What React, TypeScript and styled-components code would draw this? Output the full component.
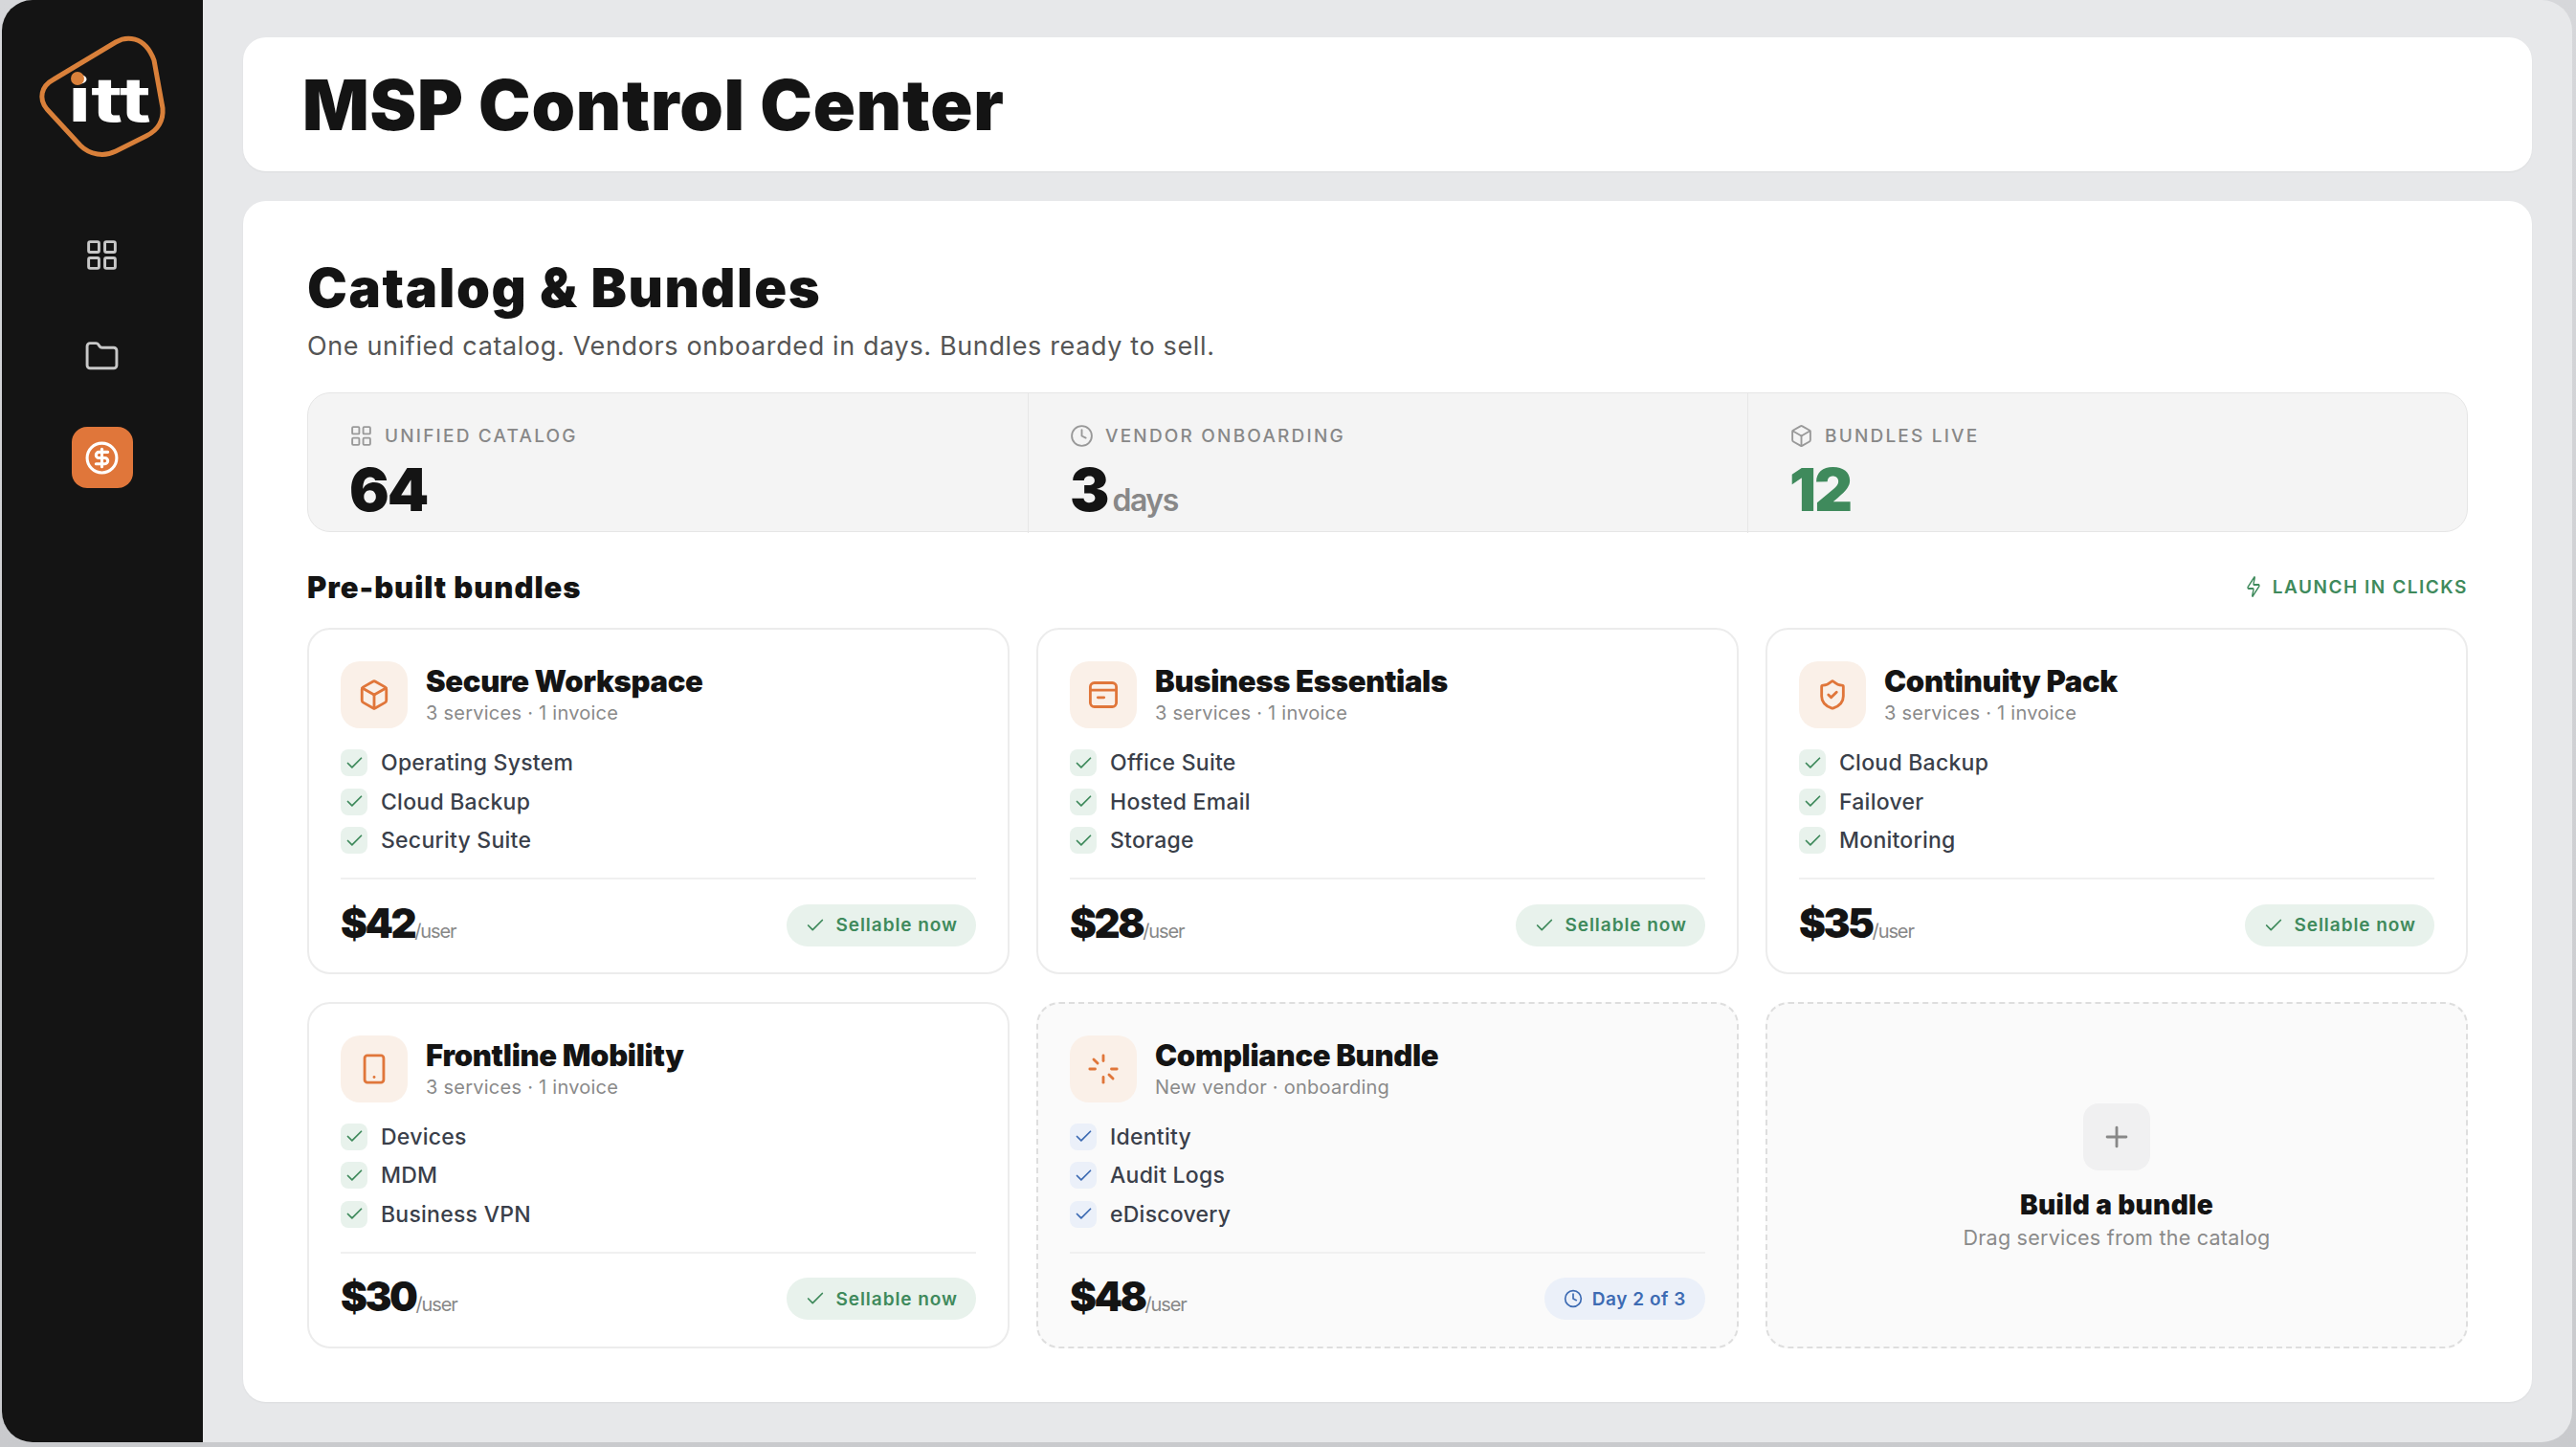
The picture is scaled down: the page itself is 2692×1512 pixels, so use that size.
import React from "react";
import styled, { createGlobalStyle } from "styled-components";
import { LayoutGrid, Folder, CircleDollarSign, Clock, Box, ShieldCheck, Smartphone, Check, Zap, Plus } from "lucide-react";

const Global = createGlobalStyle`
  html, body { margin: 0; padding: 0; width: 2692px; height: 1512px; overflow: hidden; background: #c9cacd; }
  * { box-sizing: border-box; }
  body { font-family: Inter, "Liberation Sans", sans-serif; color: #141414; }
`;

const Frame = styled.div`
  width: 2692px; height: 1512px; padding: 0 4px 5px 2px; background: linear-gradient(#d6d7da, #c9cacd);
`;
const Win = styled.div`
  height: 100%; display: flex; border-radius: 32px; overflow: hidden; background: #e7e8ea;
`;
const Side = styled.aside`
  width: 210px; flex: none; background: #141414; display: flex; flex-direction: column; align-items: center; padding: 234px 1px 0 0; position: relative; gap: 42px;
`;
const LogoSvg = styled.svg`
  position: absolute; left: 35px; top: 34px;
`;
const NavBtn = styled.div<{ $active?: boolean }>`
  width: 64px; height: 64px; border-radius: 16px; display: flex; align-items: center; justify-content: center;
  background: ${p => (p.$active ? "#e0763a" : "transparent")};
  color: ${p => (p.$active ? "#fff" : "#c8c8c8")};
`;
const Main = styled.main`
  flex: 1; min-width: 0; padding: 39px 42px 42px 42px; display: flex; flex-direction: column; gap: 31px;
`;
const Header = styled.header`
  height: 140px; flex: none; background: #fff; border-radius: 24px; display: flex; align-items: center; padding-left: 62px; box-shadow: 0 1px 2px rgba(0,0,0,.05);
`;
const Title = styled.h1`
  margin: 0; font-size: 73px; font-weight: 900; letter-spacing: 0.8px; line-height: 1;
`;
const Content = styled.section`
  flex: 1; background: #fff; border-radius: 24px; padding: 59px 67px 0; display: flex; flex-direction: column; box-shadow: 0 1px 2px rgba(0,0,0,.05);
`;
const H2 = styled.h2`
  margin: 0; font-size: 56px; font-weight: 900; line-height: 64px; letter-spacing: 1.6px;
`;
const Sub = styled.p`
  margin: 11px 0 0; font-size: 27px; line-height: 36px; font-weight: 400; color: #555; letter-spacing: 0.63px;
`;
const Stats = styled.div`
  margin-top: 30px; height: 146px; flex: none; display: grid; grid-template-columns: 752px 752px 1fr; background: #f4f4f4; border: 1.5px solid #e6e6e6; border-radius: 24px;
`;
const Stat = styled.div`
  padding: 32px 0 0 43px; & + & { border-left: 1.5px solid #e6e6e6; }
`;
const StatLabel = styled.div`
  display: flex; align-items: center; gap: 12px; font-size: 19px; line-height: 24px; font-weight: 500; letter-spacing: 2.2px; color: #888; text-transform: uppercase;
`;
const StatValue = styled.div<{ $green?: boolean }>`
  margin-top: 10px; font-size: 62px; line-height: 68px; font-weight: 900; letter-spacing: -2px; color: ${p => (p.$green ? "#3f8a5c" : "#141414")};
  small { font-size: 32px; font-weight: 600; color: #888; margin-left: 5px; letter-spacing: -1.5px; }
`;
const SectionRow = styled.div`
  margin-top: 33px; height: 48px; flex: none; display: flex; align-items: center; justify-content: space-between;
`;
const H3 = styled.h3`
  margin: 0; font-size: 31px; font-weight: 900; letter-spacing: 0.95px;
`;
const Launch = styled.div`
  display: flex; align-items: center; gap: 12px; font-size: 19px; font-weight: 600; letter-spacing: 1.55px; color: #3f8a5c; text-transform: uppercase;
`;
const Grid = styled.div`
  margin-top: 19px; display: grid; grid-template-columns: repeat(3, 734px); grid-auto-rows: 362px; column-gap: 28px; row-gap: 28.5px;
`;
const Card = styled.article<{ $dashed?: boolean }>`
  border-radius: 24px; padding: 33px 33px 0 33px; display: flex; flex-direction: column;
  background: ${p => (p.$dashed ? "#fafafa" : "#fff")};
  border: 2px ${p => (p.$dashed ? "dashed #dedede" : "solid #ececec")};
`;
const CardHead = styled.div`
  display: flex; gap: 19px; height: 70px;
`;
const IconTile = styled.div`
  width: 70px; height: 70px; flex: none; border-radius: 20px; background: #faf0e8; color: #e0763a; display: flex; align-items: center; justify-content: center;
`;
const CardTitle = styled.div`
  font-size: 31px; line-height: 38px; font-weight: 900; letter-spacing: -0.3px; margin-top: 2px;
`;
const CardSub = styled.div`
  font-size: 20px; line-height: 26px; color: #8a8a8a; letter-spacing: 0.25px; margin-top: 1px;
`;
const List = styled.ul`
  list-style: none; margin: 22px 0 0; padding: 0; display: flex; flex-direction: column; gap: 12.5px;
`;
const Item = styled.li`
  display: flex; align-items: center; gap: 14px; height: 28px; font-size: 23px; font-weight: 500; color: #3a3f4a; letter-spacing: 0.25px;
`;
const CheckBox = styled.span<{ $blue?: boolean }>`
  width: 28px; height: 28px; border-radius: 8px; display: flex; align-items: center; justify-content: center;
  background: ${p => (p.$blue ? "#ebf0f9" : "#e8f2ec")}; color: ${p => (p.$blue ? "#3d6bb3" : "#3f8a5c")};
`;
const Foot = styled.div`
  margin-top: 25px; border-top: 2px solid #f0f0f0; padding-top: 25px; display: flex; align-items: center; justify-content: space-between; height: 72px;
`;
const Price = styled.div`
  margin-top: 4px; font-size: 42px; line-height: 44px; font-weight: 900; letter-spacing: -2.5px;
  small { font-size: 20px; font-weight: 400; color: #888; letter-spacing: -1.1px; margin-left: 0; }
`;
const Pill = styled.div<{ $blue?: boolean }>`
  height: 44px; padding: 0 ${p => (p.$blue ? "20px" : "19px")}; border-radius: 22px; display: flex; align-items: center; gap: 10px; font-size: 19px; font-weight: 600;
  letter-spacing: ${p => (p.$blue ? "0.55px" : "0.95px")};
  background: ${p => (p.$blue ? "#ebf0f9" : "#e8f2ec")}; color: ${p => (p.$blue ? "#3d6bb3" : "#3f8a5c")};
`;
const BuildCard = styled(Card)`
  align-items: center; padding: 104px 33px 0;
`;
const PlusTile = styled.div`
  width: 70px; height: 70px; border-radius: 16px; background: #f0f0f1; color: #888; display: flex; align-items: center; justify-content: center;
`;
const BuildTitle = styled.div`
  margin-top: 18px; font-size: 28px; line-height: 36px; font-weight: 900; letter-spacing: 0.35px;
`;
const BuildSub = styled.div`
  margin-top: 1px; font-size: 21.5px; line-height: 30px; color: #8a8a8a; letter-spacing: 0.25px;
`;

const Logo = () => (
  <LogoSvg width="142" height="140" viewBox="36 34 142 140">
    <path
      d="M55 83 L120 44 C130 38 150 36 160 63 L169 113 C170 127 164 136 152 142 L120 158 C108 164 93 162 83 152 L48 114 C39 103 42 90 55 83 Z"
      fill="none" stroke="#d9803a" strokeWidth="5" strokeLinejoin="round"
    />
    <text x="70" y="127" fontFamily="Inter, sans-serif" fontWeight="700" fontSize="64" fill="#fff" textLength="87" lengthAdjust="spacingAndGlyphs">itt</text>
    <circle cx="80" cy="82" r="7" fill="#d9803a" />
  </LogoSvg>
);

const Card2 = () => (
  <svg width="34" height="34" viewBox="0 0 24 24" fill="none" stroke="currentColor" strokeWidth="2" strokeLinecap="round" strokeLinejoin="round">
    <rect x="2.4" y="3.2" width="19.2" height="17.6" rx="3" />
    <path d="M2.4 8.5h19.2" />
    <path d="M8 14h4.5" />
  </svg>
);
const Spinner = () => (
  <svg width="34" height="34" viewBox="0 0 24 24" fill="none" stroke="currentColor" strokeWidth="2" strokeLinecap="round">
    <path d="M12 2v4" /><path d="M12 18v4" /><path d="M2 12h4" /><path d="M18 12h4" />
    <path d="m4.9 4.9 2.9 2.9" /><path d="m16.2 16.2 2.9 2.9" />
  </svg>
);

type B = { icon: React.ReactNode; title: string; sub: string; items: string[]; price: string; blue?: boolean };
const bundles: B[] = [
  { icon: <Box size={34} strokeWidth={2} />, title: "Secure Workspace", sub: "3 services · 1 invoice", items: ["Operating System", "Cloud Backup", "Security Suite"], price: "$42" },
  { icon: <Card2 />, title: "Business Essentials", sub: "3 services · 1 invoice", items: ["Office Suite", "Hosted Email", "Storage"], price: "$28" },
  { icon: <ShieldCheck size={34} strokeWidth={2} />, title: "Continuity Pack", sub: "3 services · 1 invoice", items: ["Cloud Backup", "Failover", "Monitoring"], price: "$35" },
  { icon: <Smartphone size={34} strokeWidth={2} />, title: "Frontline Mobility", sub: "3 services · 1 invoice", items: ["Devices", "MDM", "Business VPN"], price: "$30" },
  { icon: <Spinner />, title: "Compliance Bundle", sub: "New vendor · onboarding", items: ["Identity", "Audit Logs", "eDiscovery"], price: "$48", blue: true },
];

export default function App() {
  return (
    <Frame>
      <Global />
      <Win>
        <Side>
          <Logo />
          <NavBtn><LayoutGrid size={37} strokeWidth={1.9} /></NavBtn>
          <NavBtn><Folder size={37} strokeWidth={1.9} /></NavBtn>
          <NavBtn $active><CircleDollarSign size={37} strokeWidth={2} /></NavBtn>
        </Side>
        <Main>
          <Header><Title>MSP Control Center</Title></Header>
          <Content>
            <H2>Catalog &amp; Bundles</H2>
            <Sub>One unified catalog. Vendors onboarded in days. Bundles ready to sell.</Sub>
            <Stats>
              <Stat>
                <StatLabel><LayoutGrid size={25} strokeWidth={1.8} color="#999" />Unified catalog</StatLabel>
                <StatValue>64</StatValue>
              </Stat>
              <Stat>
                <StatLabel><Clock size={25} strokeWidth={1.8} color="#999" />Vendor onboarding</StatLabel>
                <StatValue>3<small>days</small></StatValue>
              </Stat>
              <Stat>
                <StatLabel><Box size={25} strokeWidth={1.8} color="#999" />Bundles live</StatLabel>
                <StatValue $green>12</StatValue>
              </Stat>
            </Stats>
            <SectionRow>
              <H3>Pre-built bundles</H3>
              <Launch><Zap width={16} height={24} preserveAspectRatio="none" strokeWidth={2} />Launch in clicks</Launch>
            </SectionRow>
            <Grid>
              {bundles.map(b => (
                <Card key={b.title} $dashed={b.blue}>
                  <CardHead>
                    <IconTile>{b.icon}</IconTile>
                    <div>
                      <CardTitle>{b.title}</CardTitle>
                      <CardSub>{b.sub}</CardSub>
                    </div>
                  </CardHead>
                  <List>
                    {b.items.map(i => (
                      <Item key={i}>
                        <CheckBox $blue={b.blue}><Check size={21} strokeWidth={2} /></CheckBox>
                        {i}
                      </Item>
                    ))}
                  </List>
                  <Foot>
                    <Price>{b.price}<small>/user</small></Price>
                    {b.blue
                      ? <Pill $blue><Clock size={20} strokeWidth={2} />Day 2 of 3</Pill>
                      : <Pill><Check size={22} strokeWidth={1.9} />Sellable now</Pill>}
                  </Foot>
                </Card>
              ))}
              <BuildCard $dashed>
                <PlusTile><Plus size={34} strokeWidth={2} /></PlusTile>
                <BuildTitle>Build a bundle</BuildTitle>
                <BuildSub>Drag services from the catalog</BuildSub>
              </BuildCard>
            </Grid>
          </Content>
        </Main>
      </Win>
    </Frame>
  );
}
